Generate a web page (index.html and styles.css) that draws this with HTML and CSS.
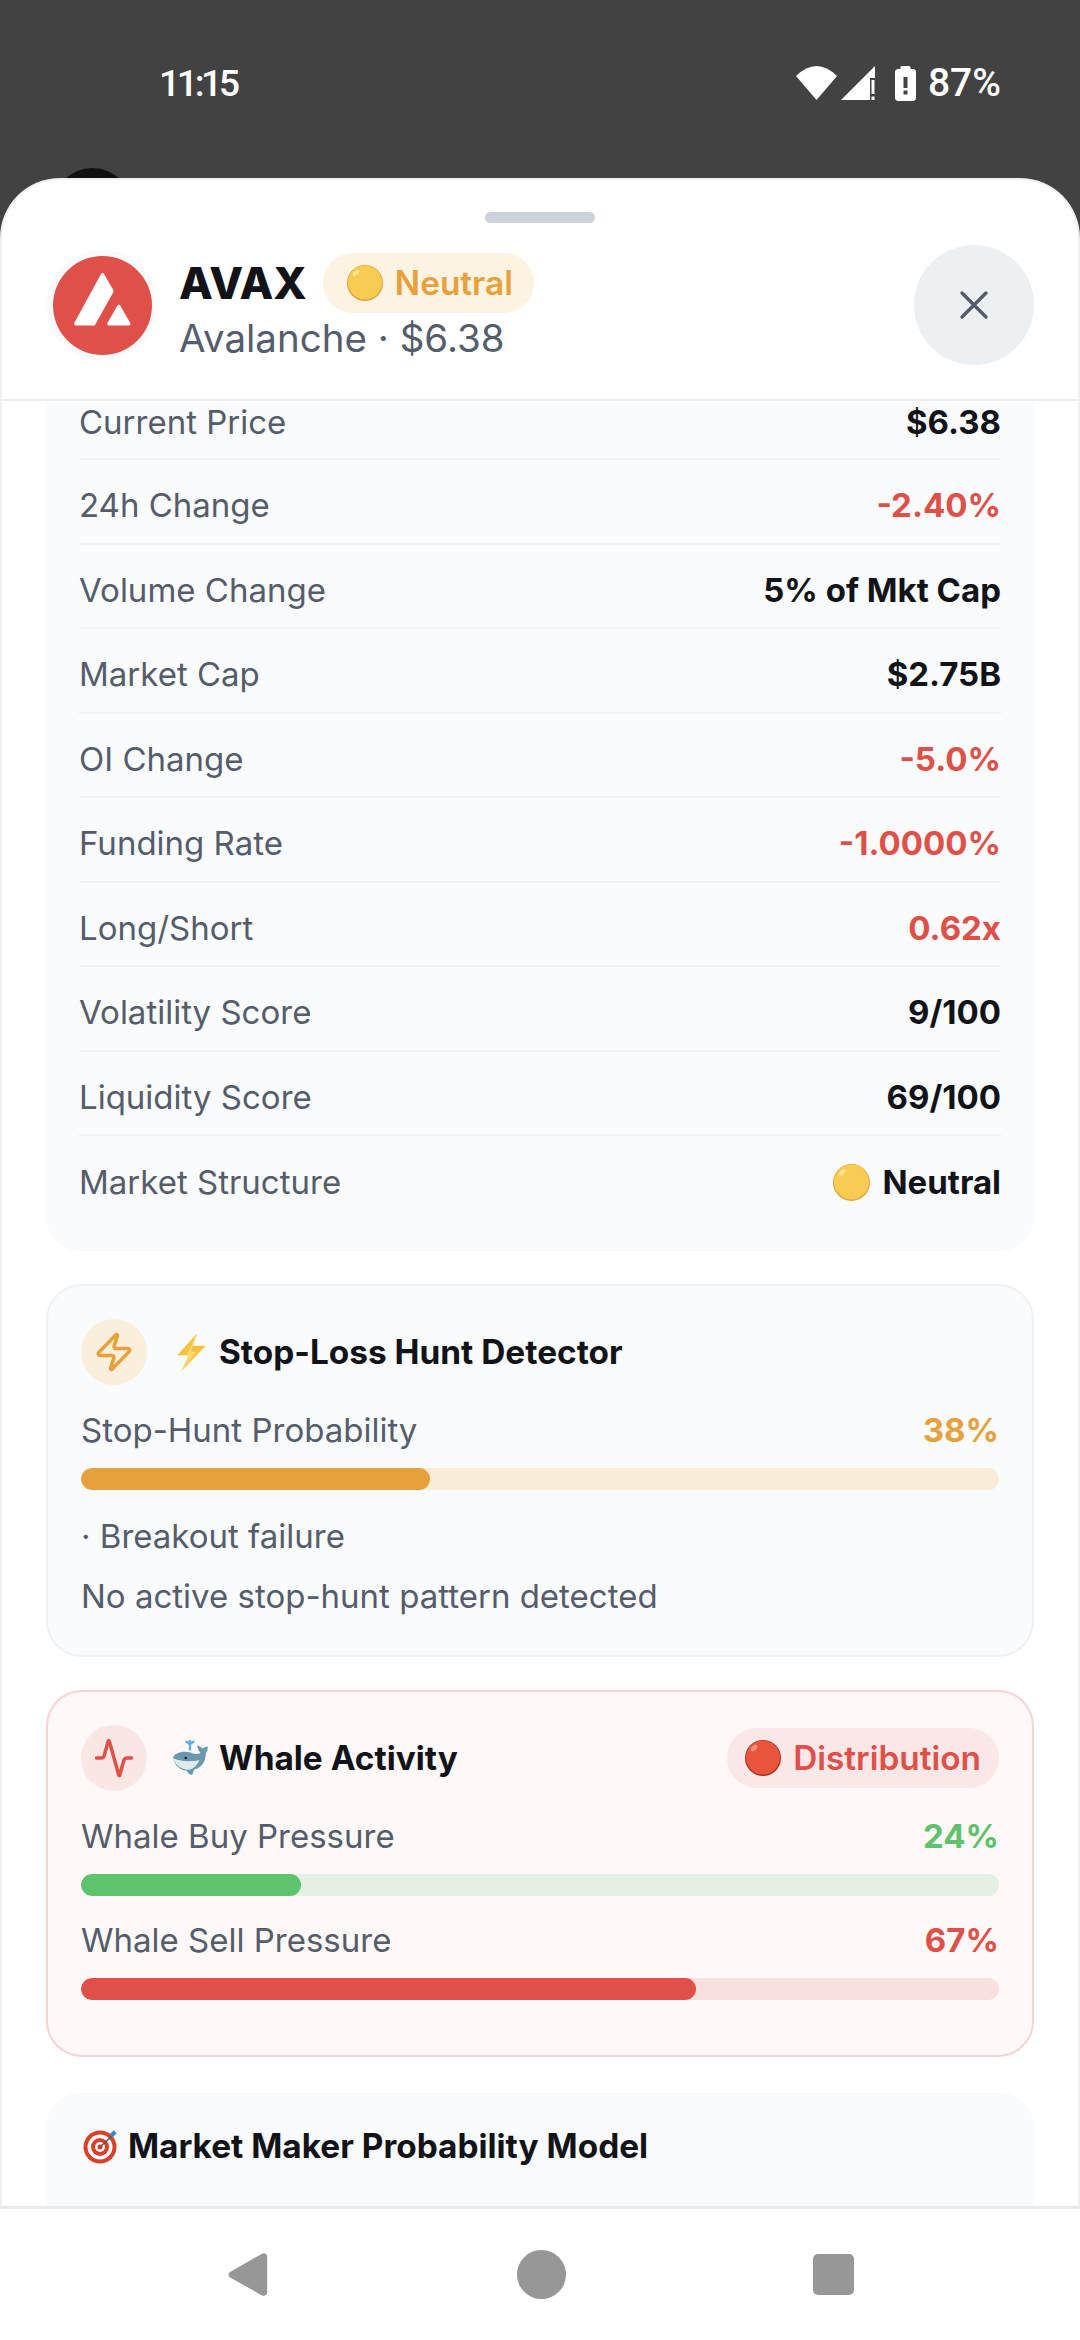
FILE: index.html
```html
<!DOCTYPE html>
<html lang="en">
<head>
    <meta charset="UTF-8">
    <meta name="viewport" content="width=device-width, initial-scale=1.0">
    <title>AVAX</title>
    <link rel="stylesheet" href="styles.css">
</head>
<body>
    <div class="status-bar">
        <span class="clock">11:15</span>
        <div class="status-icons">
            <svg class="wifi" viewBox="0 0 41 34"><path d="M0 10Q20.500 -10 41 10L20.500 34z" fill="#fff"/></svg>
            <svg class="signal" viewBox="0 0 34 34"><path d="M0 34 34 0V12H29V34z" fill="#fff"/><rect x="30.500" y="14" width="3" height="14" fill="#fff"/><rect x="30.500" y="30.500" width="3" height="3.500" fill="#fff"/></svg>
            <svg class="battery" viewBox="0 0 21 35"><path d="M5.500 3V1.500C5.500 .7 6.200 0 7 0h7c.8 0 1.500.7 1.500 1.500V3H18c1.600 0 3 1.400 3 3v26c0 1.600-1.400 3-3 3H3c-1.600 0-3-1.400-3-3V6c0-1.600 1.400-3 3-3z" fill="#fff"/><rect x="8.500" y="11" width="4" height="11" fill="#424242"/><rect x="8.500" y="24.500" width="4" height="4" fill="#424242"/></svg>
            <span class="battery-level">87%</span>
        </div>
    </div>
    <div class="peek"></div>
    <div class="sheet">
        <div class="handle"></div>
        <div class="sheet-header">
            <div class="logo-wrap">
                <svg class="logo" viewBox="0 0 100 100">
                    <circle cx="50" cy="50" r="50" fill="#df5049"/>
                    <path d="M50 19 59.500 35.500 41 68.500H23z" fill="#fff" stroke="#fff" stroke-width="3.500" stroke-linejoin="round"/>
                    <path d="M66.500 51 76.500 68.500H56.500z" fill="#fff" stroke="#fff" stroke-width="3.500" stroke-linejoin="round"/>
                </svg>
            </div>
            <div class="coin-info">
                <div class="coin-title">
                    <span class="coin-symbol">AVAX</span>
                    <span class="pill pill-amber">
                        <svg class="emoji" viewBox="0 0 36 36"><use href="#coin"/></svg>
                        Neutral
                    </span>
                </div>
                <div class="coin-sub">Avalanche · $6.38</div>
            </div>
            <button class="close-btn" aria-label="Close">
                <svg viewBox="0 0 24 24"><path d="M3 3 21 21M21 3 3 21" stroke="#545b68" stroke-width="2.500" stroke-linecap="round" fill="none"/></svg>
            </button>
        </div>
        <div class="scroll">
            <div class="stat-card">
                <div class="stat-row first"><span>Current Price</span><b>$6.38</b></div>
                <div class="stat-row"><span>24h Change</span><b class="red">-2.40%</b></div>
                <div class="stat-row"><span>Volume Change</span><b>5% of Mkt Cap</b></div>
                <div class="stat-row"><span>Market Cap</span><b>$2.75B</b></div>
                <div class="stat-row"><span>OI Change</span><b class="red">-5.0%</b></div>
                <div class="stat-row"><span>Funding Rate</span><b class="red">-1.0000%</b></div>
                <div class="stat-row"><span>Long/Short</span><b class="red">0.62x</b></div>
                <div class="stat-row"><span>Volatility Score</span><b>9/100</b></div>
                <div class="stat-row"><span>Liquidity Score</span><b>69/100</b></div>
                <div class="stat-row last"><span>Market Structure</span><b class="with-emoji"><svg class="emoji" viewBox="0 0 36 36"><use href="#coin"/></svg>Neutral</b></div>
            </div>

            <div class="card card-amber">
                <div class="card-head">
                    <div class="icon-dot dot-amber">
                        <svg viewBox="0 0 24 24"><path d="M4 14a1 1 0 0 1-.78-1.630l9.900-10.200a.5.500 0 0 1 .86.460l-1.920 6.020A1 1 0 0 0 13 10h7a1 1 0 0 1 .78 1.630l-9.900 10.200a.5.500 0 0 1-.86-.460l1.920-6.020A1 1 0 0 0 11 14z" fill="none" stroke="#e7a13c" stroke-width="2" stroke-linejoin="round"/></svg>
                    </div>
                    <h3><svg class="emoji" viewBox="0 0 36 36"><path d="M24 0 5 21h11L9 36l23-24H19z" fill="#f7c33d"/><path d="M24 0 14 21h2L9 36l14-18-5-1z" fill="#fbd96a"/></svg>Stop-Loss Hunt Detector</h3>
                </div>
                <div class="meter-label"><span>Stop-Hunt Probability</span><b class="amber">38%</b></div>
                <div class="track track-amber"><div class="fill fill-amber" style="width: 38%"></div></div>
                <p class="note note-first">· Breakout failure</p>
                <p class="note">No active stop-hunt pattern detected</p>
            </div>

            <div class="card card-red">
                <div class="card-head">
                    <div class="icon-dot dot-red">
                        <svg viewBox="0 0 24 24"><path d="M22 12h-2.480a2 2 0 0 0-1.930 1.460l-2.350 8.360a.25.25 0 0 1-.48 0L9.240 2.180a.25.25 0 0 0-.48 0l-2.350 8.360A2 2 0 0 1 4.490 12H2" fill="none" stroke="#df5049" stroke-width="2" stroke-linejoin="round" stroke-linecap="round"/></svg>
                    </div>
                    <h3><svg class="emoji" viewBox="0 0 36 36">
                        <path d="M17 11V5M17 5l-4-3M17 5l4-3M17 5V1" stroke="#5aaee8" stroke-width="2.200" fill="none"/>
                        <path d="M1 17c2-3 6-5 11-5 6 0 11 4 15 1-2-2-3-4-3-7 2 1 4 2 5 3 1-1 3-2 5-2 0 3-1 5-2 7 0 8-5 14-11 15l-2 5c-2 0-4-2-5-4-8-1-12-6-13-13z" fill="#6b98ae"/>
                        <path d="M1 18c4 2 9 3 14 3 5 0 9 0 11-1-2 5-5 8-9 9-7 1-14-4-16-11z" fill="#dfe9ee"/>
                        <circle cx="13" cy="18" r="1.300" fill="#222"/>
                    </svg>Whale Activity</h3>
                    <span class="pill pill-red">
                        <svg class="emoji" viewBox="0 0 36 36"><use href="#red-dot"/></svg>
                        Distribution
                    </span>
                </div>
                <div class="meter-label"><span>Whale Buy Pressure</span><b class="green">24%</b></div>
                <div class="track track-green"><div class="fill fill-green" style="width: 24%"></div></div>
                <div class="meter-label second"><span>Whale Sell Pressure</span><b class="red">67%</b></div>
                <div class="track track-red"><div class="fill fill-red" style="width: 67%"></div></div>
            </div>

            <div class="card card-plain">
                <h3 class="solo"><svg class="emoji" viewBox="0 0 38 38">
                    <circle cx="19" cy="20" r="16.500" fill="#dd3e2a"/><circle cx="19" cy="20" r="12.500" fill="#fff"/><circle cx="19" cy="20" r="9" fill="#dd3e2a"/><circle cx="19" cy="20" r="5" fill="#fff"/><circle cx="19" cy="20" r="2.500" fill="#dd3e2a"/>
                    <path d="M19 20 31 9" stroke="#555" stroke-width="1.500"/><path d="M29 7l4-4 1 2 2 1-4 4-3-1z" fill="#3b88c3"/>
                </svg>Market Maker Probability Model</h3>
            </div>
        </div>
    </div>
    <div class="nav-bar">
        <svg class="nav-back" viewBox="0 0 42 48"><path d="M36 2 3 21c-3 1.500-3 4.500 0 6.500l33 18.500c3 1.500 6 0 6-3V5c0-3-3-4.500-6-3z" fill="#979797"/></svg>
        <div class="nav-home"></div>
        <div class="nav-recent"></div>
    </div>

    <svg class="defs" width="0" height="0">
        <defs>
            <g id="coin">
                <circle cx="18" cy="18" r="18" fill="#dfa43a"/>
                <circle cx="18" cy="17.500" r="17" fill="#f8cb52"/>
                <ellipse cx="9" cy="8" rx="4" ry="2" fill="#fde68f" transform="rotate(-42 9 8)"/>
            </g>
            <g id="red-dot">
                <circle cx="18" cy="18" r="18" fill="#a8321e"/>
                <circle cx="18" cy="17.500" r="17" fill="#e8553c"/>
                <ellipse cx="9" cy="8" rx="4" ry="2.500" fill="#f58e78" transform="rotate(-42 9 8)"/>
            </g>
        </defs>
    </svg>
</body>
</html>
```

FILE: styles.css
```css
* {
    box-sizing: border-box;
}
html, body {
    margin: 0;
    padding: 0;
}
body {
    width: 1080px;
    height: 2340px;
    overflow: hidden;
    position: relative;
    background: #424242;
    font-family: Inter, "Noto Sans", sans-serif;
    color: #111318;
}
.defs {
    position: absolute;
}

/* status bar */
.status-bar {
    height: 178px;
    display: flex;
    justify-content: space-between;
    align-items: flex-start;
    padding: 61px 79px 0 159px;
    color: #fff;
}
.clock {
    font-family: Roboto, sans-serif;
    font-size: 37.500px;
    font-weight: 500;
    line-height: 44px;
    letter-spacing: -3.500px;
}
.status-icons {
    display: flex;
    align-items: center;
    height: 44px;
}
.battery-level {
    font-family: Roboto, sans-serif;
    font-size: 39px;
    font-weight: 500;
    line-height: 44px;
    margin-left: 12px;
}
.wifi {
    width: 41px;
    height: 34px;
}
.signal {
    width: 34px;
    height: 34px;
    margin-left: 4px;
}
.battery {
    width: 21px;
    height: 35px;
    margin-left: 20px;
}
.peek {
    position: absolute;
    left: 54px;
    top: 168px;
    width: 77px;
    height: 40px;
    border-radius: 38px 38px 0 0;
    background: #111;
}

/* sheet */
.sheet {
    position: absolute;
    left: 0;
    top: 178px;
    width: 1080px;
    height: 2028px;
    background: #fff;
    border: 2px solid #eef0f2;
    border-bottom: 0;
    border-radius: 60px 60px 0 0;
    overflow: hidden;
}
.handle {
    width: 110px;
    height: 11px;
    margin: 32px auto 0;
    border-radius: 6px;
    background: #cbd2dc;
}
.sheet-header {
    height: 178px;
    display: flex;
    align-items: center;
    padding: 0 44px 12px 45px;
    border-bottom: 2px solid #eceef1;
}
.logo-wrap {
    width: 110px;
    height: 110px;
    border-radius: 50%;
    background: #f8fafc;
    display: flex;
    align-items: center;
    justify-content: center;
    flex-shrink: 0;
}
.logo {
    width: 99px;
    height: 99px;
}
.coin-info {
    margin-left: 22px;
    padding-top: 6px;
    flex: 1;
}
.coin-title {
    display: flex;
    align-items: center;
    gap: 16px;
    height: 60px;
}
.coin-symbol {
    font-size: 44px;
    font-weight: 800;
    line-height: 56px;
}
.coin-sub {
    font-size: 38.500px;
    line-height: 50px;
    color: #555c6b;
}
.pill {
    display: inline-flex;
    align-items: center;
    height: 60px;
    font-size: 33.400px;
    font-weight: 600;
    border-radius: 30px;
    white-space: nowrap;
}
.pill .emoji {
    margin-right: 12px;
}
.pill-amber {
    padding: 0 21px 0 24px;
    color: #e7a13c;
    background: #fcf3e3;
}
.pill-red {
    padding: 0 18px;
    color: #df5049;
    background: #f9e8e7;
    margin-left: auto;
}
.emoji {
    width: 36px;
    height: 36px;
    flex-shrink: 0;
}
.close-btn {
    width: 120px;
    height: 120px;
    border: 0;
    padding: 0;
    border-radius: 50%;
    background: #edf0f3;
    display: flex;
    align-items: center;
    justify-content: center;
}
.close-btn svg {
    width: 32px;
    height: 32px;
}

/* scrolling content */
.scroll {
    padding: 0 44px;
}
.stat-card {
    background: #f9fbfd;
    border-radius: 0 0 36px 36px;
    padding: 0 33px;
    height: 851px;
}
.stat-row {
    height: 84.500px;
    padding-top: 8px;
    display: flex;
    justify-content: space-between;
    align-items: center;
    font-size: 33px;
    color: #555c6b;
    border-bottom: 2px solid #f0f2f5;
}
.stat-row.first {
    height: 59px;
    padding-top: 0;
    padding-bottom: 15px;
}
.stat-row.last {
    border-bottom: 0;
}
.stat-row b {
    font-size: 33px;
    font-weight: 700;
    color: #111318;
}
.stat-row b.red, .red {
    color: #df5049;
}
.amber {
    color: #e7a13c;
}
.green {
    color: #5fc26c;
}
.with-emoji {
    display: flex;
    align-items: center;
}
.with-emoji .emoji {
    width: 37px;
    height: 37px;
    margin-right: 12px;
}

/* cards */
.card {
    padding: 33px 33px 0;
    background: #f9fbfd;
    border: 2px solid #eff1f4;
    border-radius: 36px;
}
.card-amber {
    margin-top: 32px;
    height: 373px;
}
.card-red {
    margin-top: 33px;
    height: 367px;
    background: #fef9f8;
    border-color: #f4d4d4;
}
.card-plain {
    margin-top: 35px;
    border: 0;
    border-radius: 36px 36px 0 0;
    padding: 34px 35px 0;
    height: 120px;
}
.card-head {
    display: flex;
    align-items: center;
    height: 66px;
    margin-bottom: 23px;
}
.icon-dot {
    width: 66px;
    height: 66px;
    border-radius: 50%;
    display: flex;
    align-items: center;
    justify-content: center;
    margin-right: 25px;
    flex-shrink: 0;
}
.icon-dot svg {
    width: 42px;
    height: 42px;
}
.dot-amber {
    background: #faefdc;
}
.dot-red {
    background: #f9e7e6;
}
h3 {
    margin: 0;
    display: flex;
    align-items: center;
    font-size: 33.400px;
    line-height: 40px;
    font-weight: 700;
    color: #111318;
}
h3 .emoji {
    width: 38px;
    height: 38px;
    margin-right: 9px;
}
.meter-label {
    display: flex;
    justify-content: space-between;
    align-items: center;
    height: 44px;
    font-size: 33px;
    color: #555c6b;
}
.meter-label b {
    font-weight: 700;
}
.meter-label.second {
    margin-top: 22px;
}
.track {
    height: 22px;
    border-radius: 11px;
    margin-top: 16px;
    overflow: hidden;
}
.fill {
    height: 100%;
    border-radius: 11px;
}
.track-amber {
    background: #f9edd9;
}
.fill-amber {
    background: #e7a13c;
}
.track-green {
    background: #e3f1e5;
}
.fill-green {
    background: #5fc26c;
}
.track-red {
    background: #f8e0df;
}
.fill-red {
    background: #df5049;
}
.note {
    margin: 0;
    font-size: 33px;
    line-height: 60px;
    color: #555c6b;
}
.note-first {
    margin-top: 16px;
}

/* nav */
.nav-bar {
    position: absolute;
    left: 0;
    top: 2206px;
    width: 1080px;
    height: 134px;
    background: #fff;
    border-top: 3px solid #e8eaee;
    display: flex;
    align-items: center;
    justify-content: center;
}
.nav-back {
    width: 41px;
    height: 45px;
}
.nav-home {
    width: 49px;
    height: 49px;
    border-radius: 50%;
    background: #979797;
    margin-left: 249px;
}
.nav-recent {
    width: 41px;
    height: 41px;
    border-radius: 5px;
    background: #979797;
    margin-left: 247px;
}
```
